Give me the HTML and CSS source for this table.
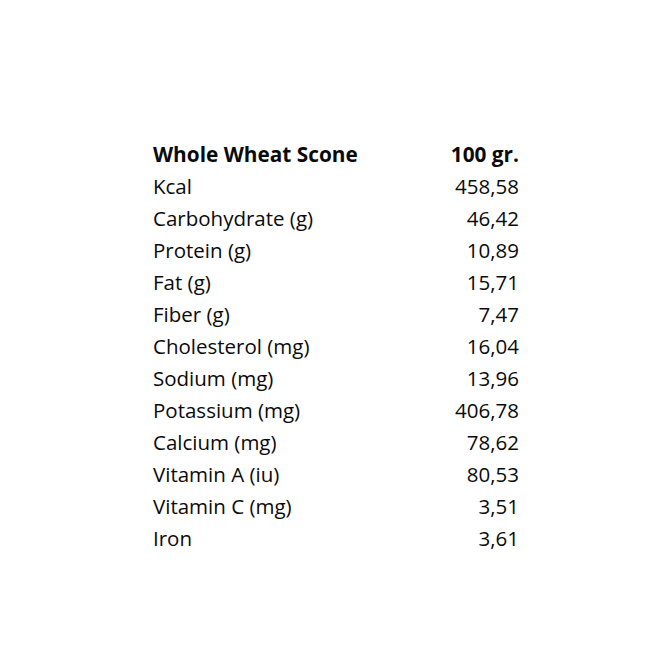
FILE: index.html
```html
<!DOCTYPE html>
<html>
<head>
<meta charset="utf-8">
<link rel="stylesheet" href="styles.css">
</head>
<body>
<div class="page">
  <div class="nutrition">
    <div class="row head"><span class="label">Whole Wheat Scone</span><span class="value">100 gr.</span></div>
    <div class="row"><span class="label">Kcal</span><span class="value">458,58</span></div>
    <div class="row"><span class="label">Carbohydrate (g)</span><span class="value">46,42</span></div>
    <div class="row"><span class="label">Protein (g)</span><span class="value">10,89</span></div>
    <div class="row"><span class="label">Fat (g)</span><span class="value">15,71</span></div>
    <div class="row"><span class="label">Fiber (g)</span><span class="value">7,47</span></div>
    <div class="row"><span class="label">Cholesterol (mg)</span><span class="value">16,04</span></div>
    <div class="row"><span class="label">Sodium (mg)</span><span class="value">13,96</span></div>
    <div class="row"><span class="label">Potassium (mg)</span><span class="value">406,78</span></div>
    <div class="row"><span class="label">Calcium (mg)</span><span class="value">78,62</span></div>
    <div class="row"><span class="label">Vitamin A (iu)</span><span class="value">80,53</span></div>
    <div class="row"><span class="label">Vitamin C (mg)</span><span class="value">3,51</span></div>
    <div class="row"><span class="label">Iron</span><span class="value">3,61</span></div>
  </div>
</div>
</body>
</html>
```
FILE: styles.css
```css
html, body {
  margin: 0;
  padding: 0;
  background: #ffffff;
}
.page {
  width: 667px;
  height: 659px;
  padding: 138px 0 0 153px;
  box-sizing: border-box;
}
.nutrition {
  width: 366px;
  display: flex;
  flex-direction: column;
  font-family: "Open Sans", "Liberation Sans", sans-serif;
  font-size: 20.5px;
  color: #0a0a0a;
}
.row {
  display: flex;
  justify-content: space-between;
  height: 32px;
  line-height: 32px;
}
.head {
  font-weight: 700;
  font-size: 20.8px;
}
```
